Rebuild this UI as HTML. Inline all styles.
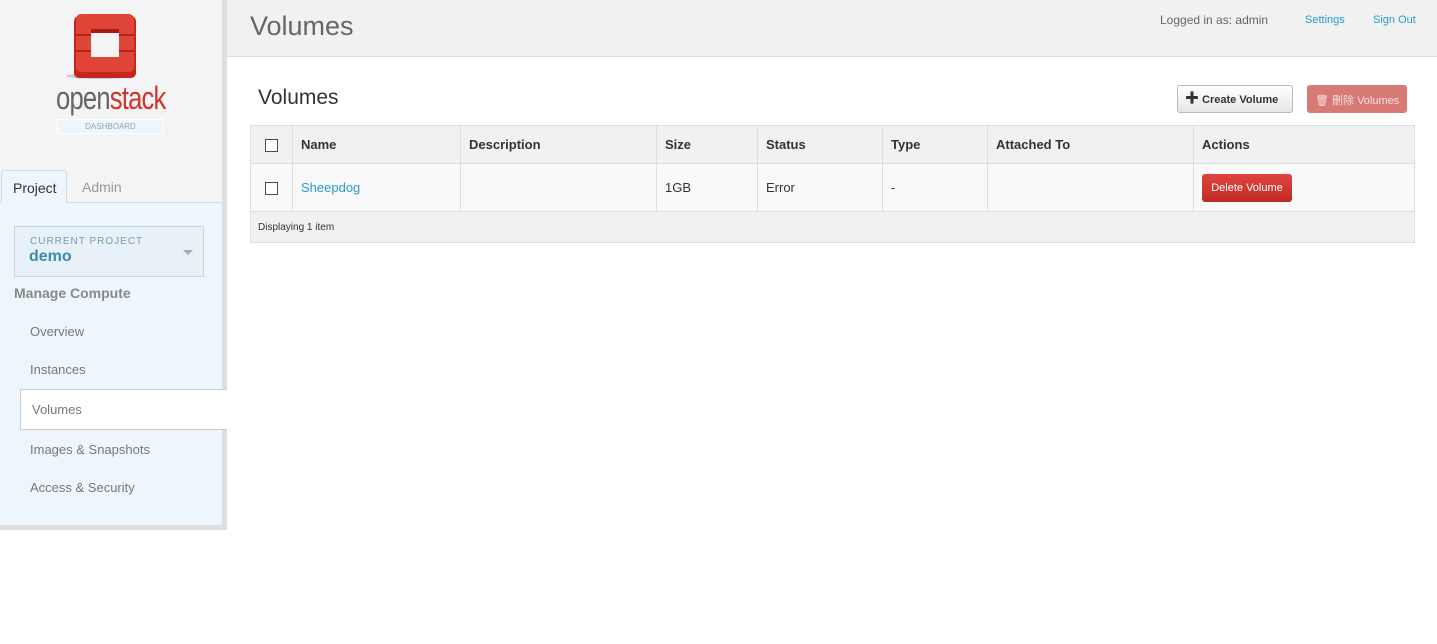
<!DOCTYPE html>
<html><head><meta charset="utf-8"><style>
*{box-sizing:border-box;margin:0;padding:0}
body{width:1437px;height:644px;background:#fff;font-family:"Liberation Sans","Noto Sans CJK SC",sans-serif;position:relative;overflow:hidden;font-size:13px;color:#333}
.abs{position:absolute}
#side{left:0;top:0;width:222px;height:525px;background:#f4f4f4}
#sideR{left:222px;top:0;width:5px;height:530px;background:#dedede}
#sideB{left:0;top:525px;width:227px;height:5px;background:#dedede}
#panel{left:0;top:202px;width:222px;height:323px;background:#edf6fc;border-top:1px solid #cfdde7}
#tab{left:1px;top:170px;width:66px;height:33px;background:#edf6fc;border:1px solid #cfdde7;border-bottom:none;border-radius:4px 4px 0 0;font-size:14px;color:#333;padding:9px 0 0 11px}
#header{left:227px;top:0;width:1210px;height:57px;background:#f1f1f1;border-bottom:1px solid #ddd}
.nav{left:30px;font-size:13px;color:#777}
table{position:absolute;left:250px;top:125px;width:1165px;border-collapse:collapse;font-size:13px}
td,th{border:1px solid #ddd;text-align:left;padding:0 8px}
th{height:38px;background:#f1f1f1;font-weight:bold;color:#333}
td{height:48px;background:#f9f9f9}
.cb{display:inline-block;width:13px;height:13px;border:1px solid #3a5068;background:#fff;vertical-align:middle}
</style></head><body>
<div class="abs" id="side"></div>
<div class="abs" id="sideR"></div>
<div class="abs" id="sideB"></div>
<svg class="abs" style="left:62px;top:12px" width="80" height="70" viewBox="0 0 80 70">
<ellipse cx="38" cy="64" rx="34" ry="3" fill="#ccc"/>
<rect x="12" y="4" width="62" height="62" rx="5" fill="#c4271f"/>
<rect x="14" y="2" width="58" height="58" rx="5" fill="#e04638"/>
<rect x="29" y="17" width="28" height="28" fill="#f4f4f4"/>
<rect x="29" y="17" width="28" height="4" fill="#a61d16"/>
<rect x="14" y="22" width="15" height="2" fill="#b72219"/><rect x="57" y="22" width="15" height="2" fill="#b72219"/>
<rect x="14" y="38" width="15" height="2" fill="#b72219"/><rect x="57" y="38" width="15" height="2" fill="#b72219"/>
</svg>
<div class="abs" style="left:56px;top:80px;font-size:32px;letter-spacing:-1px;color:#666;transform:scaleX(0.8);transform-origin:0 0">open<span style="color:#d0342c">stack</span></div>
<div class="abs" style="left:57px;top:119px;width:107px;height:15px;background:#eef5fb;border:1px solid #fff;font-size:8px;color:#8aa;text-align:center;line-height:14px">DASHBOARD</div>
<div class="abs" id="panel"></div>
<div class="abs" id="tab">Project</div>
<div class="abs" style="left:82px;top:179px;font-size:14px;color:#999">Admin</div>
<div class="abs" style="left:14px;top:226px;width:190px;height:51px;border:1px solid #c5d5e0;background:#e8f1f8"></div>
<div class="abs" style="left:30px;top:236px;font-size:10px;color:#7a9aac;letter-spacing:1px">CURRENT PROJECT</div>
<div class="abs" style="left:29px;top:248px;font-size:16px;font-weight:bold;color:#3f8aa8">demo</div>
<div class="abs" style="left:183px;top:250px;width:0;height:0;border-left:5px solid transparent;border-right:5px solid transparent;border-top:5px solid #aaa"></div>
<div class="abs" style="left:14px;top:285px;font-size:14px;font-weight:bold;color:#888">Manage Compute</div>
<div class="abs nav" style="top:324px">Overview</div>
<div class="abs nav" style="top:362px">Instances</div>
<div class="abs" style="left:20px;top:389px;width:207px;height:41px;background:#fff;border:1px solid #ccc;border-right:none"></div>
<div class="abs nav" style="left:32px;top:402px">Volumes</div>
<div class="abs nav" style="top:442px">Images &amp; Snapshots</div>
<div class="abs nav" style="top:480px">Access &amp; Security</div>
<div class="abs" id="header"></div>
<div class="abs" style="left:250px;top:11px;font-size:27px;color:#666">Volumes</div>
<div class="abs" style="left:1160px;top:13px;font-size:12px;color:#666">Logged in as: admin</div>
<div class="abs" style="left:1305px;top:14px;font-size:11px;color:#2a9bd0">Settings</div>
<div class="abs" style="left:1373px;top:14px;font-size:11px;color:#2a9bd0">Sign Out</div>
<div class="abs" style="left:258px;top:86px;font-size:21px;color:#333">Volumes</div>
<div class="abs" style="left:1177px;top:85px;width:116px;height:28px;border:1px solid #bbb;border-radius:3px;background:linear-gradient(#fff,#e6e6e6);font-size:11px;font-weight:bold;color:#333;padding:7px 0 0 7px"><span style="font-size:14px;line-height:10px">✚</span> Create Volume</div>
<div class="abs" style="left:1307px;top:85px;width:100px;height:28px;border-radius:3px;background:#d77a76;font-size:11px;color:#f6dede;padding:7px 0 0 8px">🗑︎ 刪除 Volumes</div>
<table>
<tr><th style="width:42px;text-align:center"><span class="cb"></span></th><th style="width:168px">Name</th><th style="width:196px">Description</th><th style="width:101px">Size</th><th style="width:125px">Status</th><th style="width:105px">Type</th><th style="width:206px">Attached To</th><th>Actions</th></tr>
<tr><td style="text-align:center"><span class="cb"></span></td><td style="color:#2a9bd0">Sheepdog</td><td></td><td>1GB</td><td>Error</td><td>-</td><td></td><td><span style="display:inline-block;width:90px;height:28px;background:linear-gradient(#e0463f,#c02a24);border-radius:3px;color:#fff;font-size:11px;text-align:center;line-height:28px">Delete Volume</span></td></tr>
<tr><td colspan="8" style="height:31px;background:#f1f1f1;font-size:10px;padding-left:7px">Displaying 1 item</td></tr>
</table>
</body></html>
